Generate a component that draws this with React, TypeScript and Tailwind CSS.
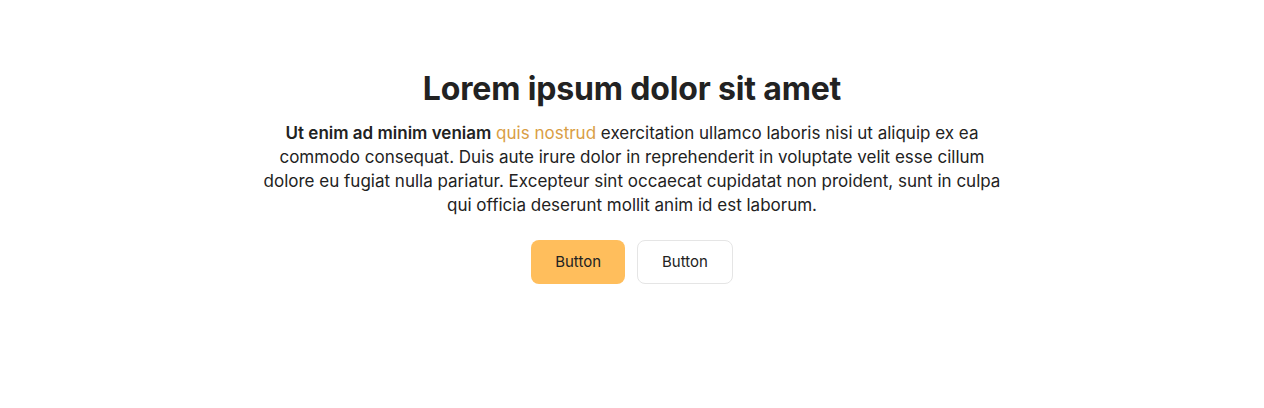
export default function App() {
  return (
    <div className="min-h-screen bg-white font-['Inter',sans-serif] text-[#222222]">
      <div className="mx-auto flex max-w-[760px] flex-col items-center pt-[69px] text-center">
        <h1 className="text-[32px] font-bold leading-10 tracking-[-0.005em]">Lorem ipsum dolor sit amet</h1>
        <p className="mt-3 text-[17px] leading-6">
          <b className="font-semibold">Ut enim ad minim veniam</b>{' '}
          <span className="text-[#d99e45]">quis nostrud</span> exercitation ullamco laboris nisi ut aliquip ex ea
          commodo consequat. Duis aute irure dolor in reprehenderit in voluptate velit esse cillum dolore eu fugiat
          nulla pariatur. Excepteur sint occaecat cupidatat non proident, sunt in culpa qui officia deserunt mollit
          anim id est laborum.
        </p>
        <div className="mt-[23px] flex gap-3">
          <button className="h-11 rounded-lg bg-[#ffbe5c] px-6 text-[15px]">Button</button>
          <button className="h-11 rounded-lg border border-[#e5e5e5] bg-white px-6 text-[15px]">Button</button>
        </div>
      </div>
    </div>
  );
}
